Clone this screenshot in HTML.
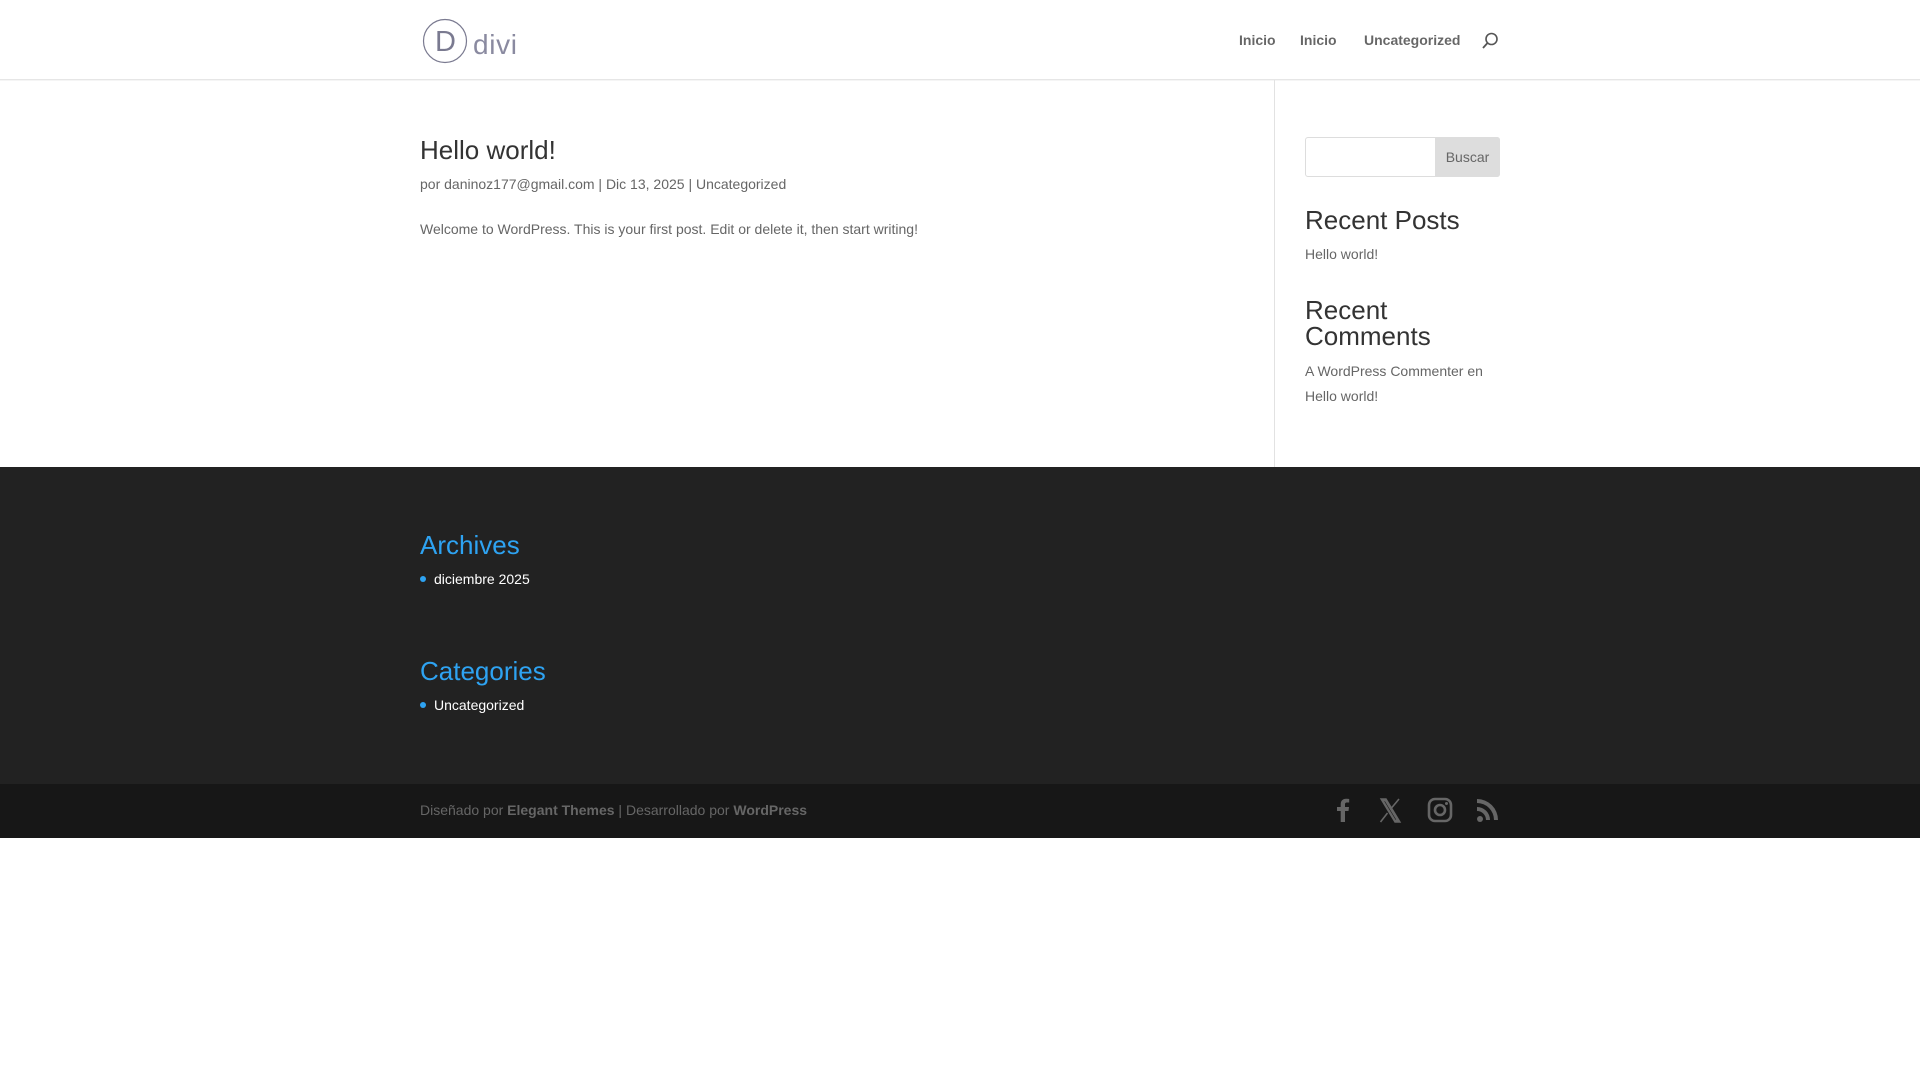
<!DOCTYPE html>
<html><head><meta charset="utf-8"><style>
*{margin:0;padding:0;box-sizing:border-box}
body{width:1920px;height:1080px;background:#fff;font-family:"Liberation Sans",sans-serif;font-size:14px;color:#666;position:relative;overflow:hidden}
.a{position:absolute;white-space:nowrap}
#hdr{position:absolute;left:0;top:0;width:1920px;height:80px;border-bottom:1px solid #e6e6e6;box-shadow:0 1px 0 rgba(0,0,0,.04)}
.nav{font-weight:bold;color:rgba(0,0,0,.6);font-size:14px;top:32px}
h1{font-weight:normal;font-size:26px;color:#333}
.wt{font-size:26px;color:#333;line-height:1}
#foot{position:absolute;left:0;top:467px;width:1920px;height:317px;background:#222}
#bot{position:absolute;left:0;top:784px;width:1920px;height:54px;background:#171717}
.fh{color:#2ea3f2;font-size:26px;line-height:1}
.li{color:#fff;font-size:14px}
.dot{position:absolute;width:6px;height:6px;border-radius:50%;background:#2ea3f2}
</style></head><body>
<div id="hdr"></div>
<svg class="a" style="left:422px;top:18px" width="100" height="46" viewBox="0 0 100 46">
<circle cx="23" cy="23" r="21.5" fill="none" stroke="#7a7a90" stroke-width="1.2"/>
<text x="13" y="33" font-family="Liberation Sans" font-size="29" fill="#7a7a90">D</text>
<text x="51" y="36" font-family="Liberation Sans" font-size="28" fill="#8a8aa0" textLength="44">divi</text>
</svg>
<div class="a nav" style="left:1239px">Inicio</div>
<div class="a nav" style="left:1300px">Inicio</div>
<div class="a nav" style="left:1364px">Uncategorized</div>
<svg class="a" style="left:1481px;top:32px" width="18" height="18" viewBox="0 0 18 18"><circle cx="10.5" cy="7" r="5.5" fill="none" stroke="#555" stroke-width="1.6"/><line x1="6.5" y1="11" x2="2" y2="16" stroke="#555" stroke-width="1.8"/></svg>
<div class="a" style="left:1274px;top:80px;width:1px;height:387px;background:#e2e2e2"></div>
<h1 class="a" style="left:420px;top:135px">Hello world!</h1>
<div class="a" style="left:420px;top:176px">por daninoz177@gmail.com | Dic 13, 2025 | Uncategorized</div>
<div class="a" style="left:420px;top:221px">Welcome to WordPress. This is your first post. Edit or delete it, then start writing!</div>
<div class="a" style="left:1305px;top:137px;width:195px;height:40px;border:1px solid #ddd;border-radius:3px"></div>
<div class="a" style="left:1435px;top:137px;width:65px;height:40px;background:#ddd;border-radius:0 3px 3px 0;text-align:center;line-height:40px">Buscar</div>
<div class="a wt" style="left:1305px;top:207px">Recent Posts</div>
<div class="a" style="left:1305px;top:246px">Hello world!</div>
<div class="a wt" style="left:1305px;top:297px">Recent</div>
<div class="a wt" style="left:1305px;top:323px">Comments</div>
<div class="a" style="left:1305px;top:363px">A WordPress Commenter en</div>
<div class="a" style="left:1305px;top:388px">Hello world!</div>
<div id="foot"></div>
<div class="a fh" style="left:420px;top:532px">Archives</div>
<div class="dot" style="left:420px;top:576px"></div>
<div class="a li" style="left:434px;top:571px">diciembre 2025</div>
<div class="a fh" style="left:420px;top:658px">Categories</div>
<div class="dot" style="left:420px;top:702px"></div>
<div class="a li" style="left:434px;top:697px">Uncategorized</div>
<div id="bot"></div>
<div class="a" style="left:420px;top:802px">Diseñado por <b>Elegant Themes</b> | Desarrollado por <b>WordPress</b></div>
<svg class="a" style="left:1331px;top:797px" width="170" height="26" viewBox="0 0 170 26" fill="#666">
<path d="M14 25V14h3.5l.5-4h-4V7.5c0-1.2.4-2 2-2h2.2V2c-.4 0-1.7-.2-3.2-.2-3.2 0-5.3 2-5.3 5.5V10H6v4h3.7v11z"/>
<path d="M50 2h5l14 23h-5z M52 3.5h2.3L66.5 23.5h-2.3z" fill="none" stroke="#666" stroke-width="1.4"/>
<path d="M68 2L60.5 11M56.5 16L49.5 25" stroke="#666" stroke-width="1.6" fill="none"/>
<rect x="98" y="2" width="22" height="22" rx="6" fill="none" stroke="#666" stroke-width="2.6"/>
<circle cx="109" cy="13" r="5" fill="none" stroke="#666" stroke-width="2.6"/>
<circle cx="115.5" cy="6.5" r="1.5"/>
<circle cx="149" cy="22" r="3"/>
<path d="M146 10a13 13 0 0 1 13 13h-4a9 9 0 0 0-9-9z"/>
<path d="M146 2a21 21 0 0 1 21 21h-4a17 17 0 0 0-17-17z"/>
</svg>
</body></html>
